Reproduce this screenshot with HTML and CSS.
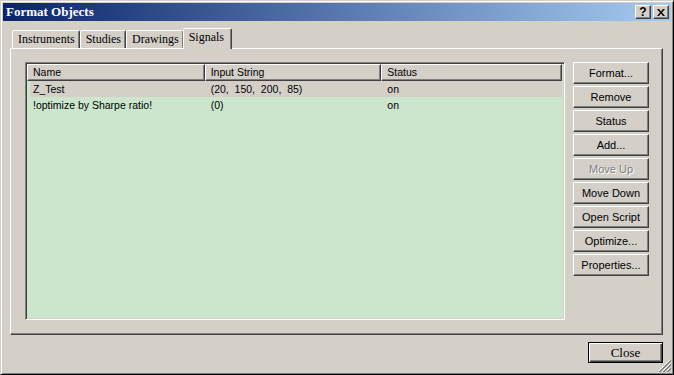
FILE: index.html
```html
<!DOCTYPE html>
<html lang="en">
<head>
  <meta charset="UTF-8" />
  <title>Format Objects</title>
  <link rel="stylesheet" href="styles.css">
</head>
<body>

  <div class="window">
    <!-- Title bar -->
    <div class="titlebar">
      <span class="title">Format Objects</span>
      <div class="caption-buttons">
        <div class="cap-btn help">?</div>
        <div class="cap-btn close-x">
          <svg width="8" height="7" viewBox="0 0 8 7">
            <path d="M0 0h2l2 2.5L6 0h2L5 3.5 8 7H6L4 4.5 2 7H0l3-3.5z" fill="#000"/>
          </svg>
        </div>
      </div>
    </div>

    <div class="content">
      <!-- Tabs -->
      <div class="tabs">
        <div class="tab">Instruments</div>
        <div class="tab">Studies</div>
        <div class="tab">Drawings</div>
        <div class="tab active">Signals</div>
      </div>

      <div class="panel">
        <div class="listview">
          <div class="lv-header">
            <div class="col col-name">Name</div>
            <div class="col col-input">Input String</div>
            <div class="col col-status">Status</div>
          </div>
          <div class="lv-row selected">
            <div class="cell col-name">Z_Test</div>
            <div class="cell col-input">(20,&nbsp; 150,&nbsp; 200,&nbsp; 85)</div>
            <div class="cell col-status">on</div>
          </div>
          <div class="lv-row">
            <div class="cell col-name">!optimize by Sharpe ratio!</div>
            <div class="cell col-input">(0)</div>
            <div class="cell col-status">on</div>
          </div>
        </div>

        <div class="side-buttons">
          <button>Format...</button>
          <button>Remove</button>
          <button>Status</button>
          <button>Add...</button>
          <button class="disabled">Move Up</button>
          <button>Move Down</button>
          <button>Open Script</button>
          <button>Optimize...</button>
          <button>Properties...</button>
        </div>
      </div>

      <div class="footer">
        <button class="close-btn">Close</button>
      </div>
    </div>

    <!-- Size grip -->
    <svg class="grip" width="13" height="13" viewBox="0 0 13 13">
      <path d="M12 1L1 12M12 5L5 12M12 9L9 12" stroke="#fff" stroke-width="1"/>
      <path d="M13 1L1 13M13 2L2 13M13 5L5 13M13 6L6 13M13 9L9 13M13 10L10 13" stroke="#808080" stroke-width="1"/>
    </svg>
  </div>

</body>
</html>
```

FILE: styles.css
```css
* {
  box-sizing: border-box;
}

body {
  margin: 0;
  padding: 0;
  background: #d4d0c8;
  font-family: "Liberation Sans", Arial, sans-serif;
  font-size: 11px;
}

.window {
  position: relative;
  width: 674px;
  height: 375px;
  background: #d4d0c8;
  border: 1px solid;
  border-color: #d4d0c8 #000 #000 #d4d0c8;
  box-shadow: inset 1px 1px #fff, inset -1px -1px #808080;
  padding: 2px;
  display: flex;
  flex-direction: column;
}

/* Title bar */
.titlebar {
  height: 18px;
  background: linear-gradient(to right, #0a246a, #a6caf0);
  display: flex;
  align-items: center;
  justify-content: space-between;
  padding: 0 2px 0 3px;
}

.title {
  color: #fff;
  font-family: "Liberation Serif", "Times New Roman", serif;
  font-weight: bold;
  font-size: 13px;
}

.caption-buttons {
  display: flex;
  gap: 2px;
}

.cap-btn {
  width: 16px;
  height: 14px;
  background: #d4d0c8;
  border: 1px solid;
  border-color: #fff #404040 #404040 #fff;
  box-shadow: inset -1px -1px #808080;
  display: flex;
  align-items: center;
  justify-content: center;
  font-family: "Liberation Sans", Arial, sans-serif;
  font-weight: bold;
  font-size: 12px;
  line-height: 1;
  color: #000;
}

/* Content */
.content {
  flex: 1;
  padding: 7px 8px 0 7px;
  display: flex;
  flex-direction: column;
}

.tabs {
  display: flex;
  align-items: flex-end;
  height: 20px;
  padding-left: 2px;
}

.tab {
  height: 18px;
  padding: 0 4px 0 5px;
  border: 1px solid;
  border-bottom: none;
  border-color: #fff #404040 transparent #fff;
  box-shadow: inset -1px 0 #808080;
  border-radius: 2px 2px 0 0;
  font-family: "Liberation Serif", "Times New Roman", serif;
  font-size: 12px;
  line-height: 17px;
  color: #000;
  background: #d4d0c8;
}

.tab.active {
  position: relative;
  z-index: 1;
  height: 21px;
  margin-bottom: -1px;
  margin-left: -1px;
  padding: 0 7px 0 5px;
  line-height: 17px;
}

.panel {
  height: 287px;
  border: 1px solid;
  border-color: #fff #404040 #404040 #fff;
  box-shadow: inset -1px -1px #808080;
  padding: 13px 15px 0 14px;
  display: flex;
  gap: 8px;
}

/* List view */
.listview {
  width: 540px;
  height: 258px;
  background: #cbe6cd;
  border: 1px solid;
  border-color: #808080 #fff #fff #808080;
  box-shadow: inset 1px 1px #404040, inset -1px -1px #d4d0c8;
  padding: 1px 2px 0 1px;
  font-size: 10.5px;
}

.lv-header {
  display: flex;
  height: 17px;
  background: #d4d0c8;
}

.col {
  border: 1px solid;
  border-color: #fff #404040 #404040 #fff;
  box-shadow: inset -1px -1px #808080;
  padding: 0 0 0 5px;
  line-height: 14px;
  color: #000;
}

.col-name {
  width: 178px;
}

.col-input {
  width: 177px;
}

.col-status {
  width: 181px;
}

.lv-row {
  display: flex;
  height: 16px;
  line-height: 16px;
  color: #000;
}

.lv-row.selected {
  background: #d4d0c8;
  margin-left: 3px;
}

.lv-row.selected .col-name {
  width: 175px;
  padding-left: 3px;
}

.cell {
  padding-left: 6px;
  white-space: nowrap;
}

/* Buttons */
.side-buttons {
  display: flex;
  flex-direction: column;
  gap: 2px;
}

button {
  width: 76px;
  height: 22px;
  background: #d4d0c8;
  border: 1px solid;
  border-color: #fff #404040 #404040 #fff;
  box-shadow: inset -1px -1px #808080;
  font-family: "Liberation Sans", Arial, sans-serif;
  font-size: 11px;
  font-weight: normal;
  color: #000;
  padding: 0;
  border-radius: 0;
}

button.disabled {
  color: #808080;
  text-shadow: 1px 1px #fff;
}

.footer {
  display: flex;
  justify-content: flex-end;
  padding-top: 7px;
}

.close-btn {
  width: 75px;
  height: 21px;
  border: 1px solid #000;
  box-shadow: inset 1px 1px #fff, inset -1px -1px #404040, inset -2px -2px #808080;
  font-family: "Liberation Serif", "Times New Roman", serif;
  font-size: 13px;
}

.grip {
  position: absolute;
  right: 2px;
  bottom: 2px;
}
```
